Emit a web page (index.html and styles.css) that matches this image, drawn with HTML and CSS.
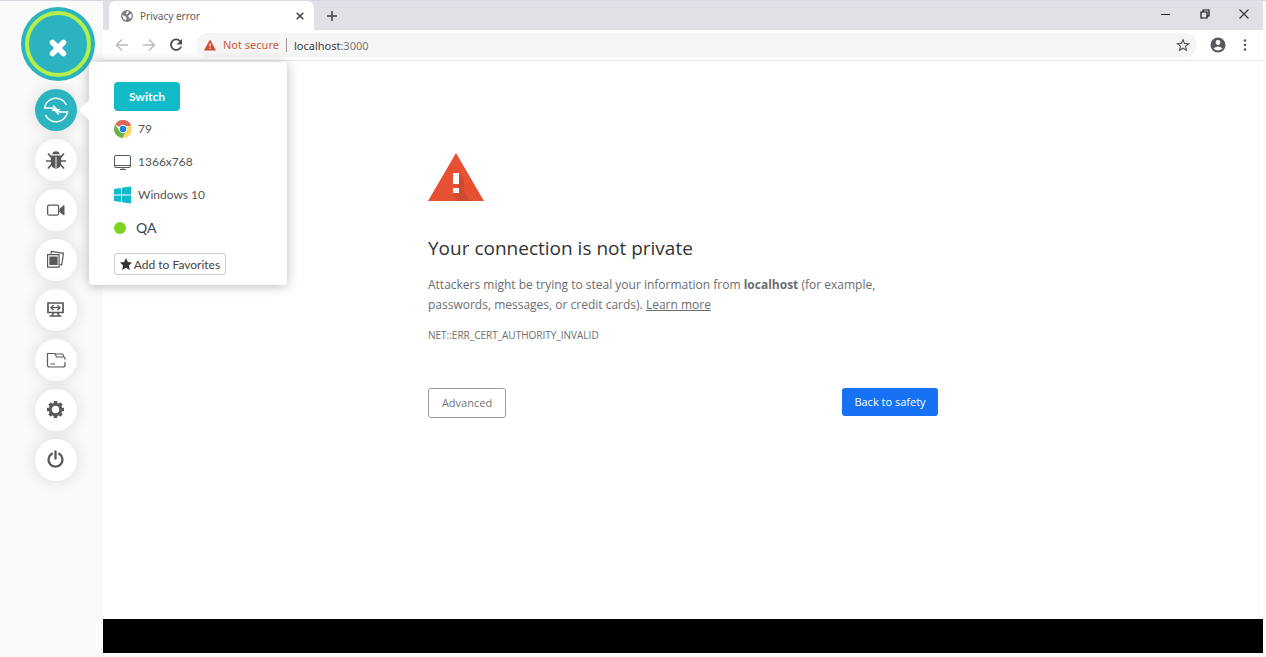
FILE: index.html
```html
<!DOCTYPE html>
<html lang="en">
<head>
<meta charset="utf-8">
<title>Privacy error</title>
<link rel="stylesheet" href="styles.css">
</head>
<body>
<div class="app">
  <aside class="sidebar">
    <button class="toggle" aria-label="Close menu">
      <svg width="74" height="74" viewBox="0 0 74 74"><circle cx="37" cy="37" r="31" fill="none" stroke="#b5ef4a" stroke-width="4"/><path d="M31.500 35.500l11 11M42.500 35.500l-11 11" stroke="#fff" stroke-width="5.600" stroke-linecap="round"/></svg>
    </button>
    <nav class="tools">
      <div class="tool-wrap">
        <button class="tool active" aria-label="Switch">
          <svg width="26" height="26" viewBox="0 0 26 26" fill="none" stroke="#fff" stroke-width="1.500"><path d="M23.500 8A11.600 11.600 0 0 0 1.500 11H9l4 1.500M10 8.500l4 4-5 1M2.500 18A11.600 11.600 0 0 0 24.500 15H17l-4-1.500M16 17.500l-4-4 5-1"/></svg>
        </button>
        <section class="panel">
          <button class="switch">Switch</button>
          <ul class="specs">
            <li><svg width="18" height="18" viewBox="0 0 18 18"><path d="M9 9L1.200 4.500A9 9 0 0 1 16.800 4.500L17 6H9z" fill="#db6757"/><path d="M9 9l8-4a9 9 0 0 1-8.500 13l4-7z" fill="#fdd663"/><path d="M1.200 4.500L5.500 11l6 1L8.500 18A9 9 0 0 1 1.200 4.500z" fill="#6ab344"/><circle cx="9" cy="9" r="4.200" fill="#fff"/><circle cx="9" cy="9" r="3.300" fill="#1d84d8"/></svg>79</li>
            <li><svg width="18" height="18" viewBox="0 0 18 18" fill="none" stroke="#58595b"><rect x=".5" y="2.500" width="16" height="12" rx="1.500"/><path d="M1 12.500h15M6 16.500h6M9 14.500v2"/></svg>1366x768</li>
            <li><svg width="18" height="18" viewBox="0 0 18 18" fill="#10bac7"><path d="M0 3l7-1v6.500H0zM8 1.800L17 .5v8H8zM0 9.500h7V16l-7-1zM8 9.500h9v8l-9-1.300z"/></svg>Windows 10</li>
            <li class="env"><span class="dot"></span>QA</li>
          </ul>
          <button class="favorite"><svg width="12" height="12" viewBox="0 0 24 24" fill="#333"><path d="M12 0l3.700 8 8.300 1-6.200 6 1.700 9-7.500-4.400L4.500 24l1.700-9L0 9l8.300-1z"/></svg>Add to Favorites</button>
        </section>
      </div>
      <button class="tool" aria-label="Report bug">
        <svg width="20" height="20" viewBox="0 0 20 20" fill="#58595b"><path d="M6.200 4.200a3.900 3.900 0 0 1 7.600 0z"/><path d="M4.800 5.500h10.400v7.500a5.200 5.500 0 0 1-10.400 0z"/><path d="M10 7v11" stroke="#ddd" stroke-width="1.200"/><path d="M5.500 7.500L2 3.500M5 11H0M5.500 14.500L2 18.500M14.500 7.500L18 3.500M15 11h5M14.500 14.500l3.500 4" stroke="#58595b" stroke-width="1.700"/></svg>
      </button>
      <button class="tool" aria-label="Record video">
        <svg width="20" height="20" viewBox="0 0 20 20"><rect x="1.600" y="5.100" width="11" height="10" rx="1.500" fill="none" stroke="#58595b" stroke-width="1.300"/><path d="M14 9l4-3.500v9.500L14 12z" fill="#58595b" stroke="#58595b" stroke-linejoin="round"/></svg>
      </button>
      <button class="tool" aria-label="Gallery">
        <svg width="20" height="20" viewBox="0 0 20 20" fill="none" stroke="#58595b" stroke-width="1.200"><path d="M1.600 4.600h11.500v12.500H1.600z"/><path d="M4 7h7v7.500H4z" fill="#58595b"/><path d="M5 4l.3-2.500 12.200 1.800-1.800 11.500-2-.3"/></svg>
      </button>
      <button class="tool" aria-label="Change resolution">
        <svg width="20" height="20" viewBox="0 0 20 20" fill="none" stroke="#58595b"><path d="M2 3h15v9.500H2z" stroke-width="1.700"/><path d="M5 7.700h9M7.500 5.200L5 7.700l2.500 2.500M11.500 5.200L14 7.700l-2.500 2.500" stroke-width="1.300"/><path d="M7.500 13L6 15.500M11.500 13l1.500 2.500M3.500 16h12" stroke-width="1.600"/></svg>
      </button>
      <button class="tool" aria-label="Project">
        <svg width="20" height="20" viewBox="0 0 20 20" fill="none" stroke="#58595b" stroke-width="1.200"><path d="M16.500 17H3.500q-2 0-2-2V3.500h7.500l1.500 3.500h7q1.500 0 1.500 1.500v1M19 12v3q0 2-2.500 2M9.500 4h7l1.500 2.500M4.500 14h4.500"/></svg>
      </button>
      <button class="tool" aria-label="Settings">
        <svg width="20" height="20" viewBox="0 0 20 20" fill="none" stroke="#58595b"><circle cx="9.500" cy="9.500" r="5.300" stroke-width="3"/><path d="M9.500 1v3M9.500 15v3M1 9.500h3M15 9.500h3M3.500 3.500l2 2M13.500 13.500l2 2M15.500 3.500l-2 2M5.500 13.500l-2 2" stroke-width="3.600"/></svg>
      </button>
      <button class="tool" aria-label="End session">
        <svg width="20" height="20" viewBox="0 0 20 20" fill="none" stroke="#58595b" stroke-width="2.300" stroke-linecap="round"><path d="M9.500 1.500v7M5.800 3.700a7 7 0 1 0 7.400 0"/></svg>
      </button>
    </nav>
  </aside>

  <main class="browser">
    <header class="tabbar">
      <div class="tab">
        <svg width="12" height="12" viewBox="0 0 12 12"><circle cx="6" cy="6" r="6" fill="#7b7e82"/><path d="M1 5l3 1 1.500 1.500L5 10.500 2.500 9zM7 6l3-2.500 1 2.500-2 3-1-1.500zM6 1l2 .5-1.500 2.500L5 4.500z" fill="#fff"/></svg>
        <span class="tab-title">Privacy error</span>
        <button class="icon" aria-label="Close tab"><svg width="8" height="8" viewBox="0 0 8 8"><path d="M.7.700l6.600 6.600M7.300.700L.7 7.300" stroke="#3c4043" stroke-width="1.500"/></svg></button>
      </div>
      <button class="icon" aria-label="New tab"><svg width="12" height="12" viewBox="0 0 12 12"><path d="M6 1v10M1 6h10" stroke="#3c4043" stroke-width="1.500"/></svg></button>
      <div class="window-controls">
        <button class="icon" aria-label="Minimize"><svg width="10" height="10" viewBox="0 0 10 10"><path d="M0 5.500h9" stroke="#222"/></svg></button>
        <button class="icon" aria-label="Restore"><svg width="10" height="10" viewBox="0 0 10 10" fill="none" stroke="#111"><path d="M1 3h6v6H1zM3 2.500v-1.500h6v6H7.500" stroke-width="1.200"/></svg></button>
        <button class="icon" aria-label="Close window"><svg width="10" height="10" viewBox="0 0 10 10"><path d="M.5.500l9 9M9.500.500l-9 9" stroke="#333" stroke-width="1.100"/></svg></button>
      </div>
    </header>
    <div class="toolbar">
      <button class="icon" aria-label="Back"><svg width="14" height="14" viewBox="0 0 14 14" fill="none" stroke="#b9bbbe" stroke-width="1.500"><path d="M13 7H2M7 1.500L1.500 7 7 12.500"/></svg></button>
      <button class="icon" aria-label="Forward"><svg width="14" height="14" viewBox="0 0 14 14" fill="none" stroke="#b9bbbe" stroke-width="1.500"><path d="M1 7h11M7 1.500L12.500 7 7 12.500"/></svg></button>
      <button class="icon" aria-label="Reload"><svg width="14" height="14" viewBox="0 0 14 14"><path d="M11.500 3.500A5.300 5.300 0 1 0 12.200 8.500" fill="none" stroke="#494c50" stroke-width="1.800"/><path d="M13 1v5.500H7.500z" fill="#494c50"/></svg></button>
      <div class="address">
        <svg width="12" height="12" viewBox="0 0 12 12"><path d="M6 .5L12 11.500H0z" fill="#d14a2c"/><path d="M6 4.500v3M6 8.700v1.300" stroke="#fff" stroke-width="1.300"/></svg>
        <span class="insecure">Not secure</span>
        <span class="url">localhost<span class="port">:3000</span></span>
        <button class="icon star" aria-label="Bookmark"><svg width="14" height="14" viewBox="0 0 24 24" fill="none" stroke="#55585c" stroke-width="2"><path d="M12 3l2.700 6.300 6.800.6-5.200 4.500 1.600 6.600-5.900-3.500L6.100 21l1.600-6.600L2.500 9.900l6.800-.6z"/></svg></button>
      </div>
      <button class="icon profile" aria-label="Profile"><svg width="16" height="16" viewBox="0 0 16 16"><circle cx="8" cy="8" r="7.500" fill="#55585c"/><circle cx="8" cy="5.500" r="2.400" fill="#fff"/><path d="M3.500 11.500q4.500-4 9 0-4.500 4-9 0z" fill="#fff"/></svg></button>
      <button class="icon" aria-label="Menu"><svg width="4" height="14" viewBox="0 0 4 14" fill="#55585c"><circle cx="2" cy="2.500" r="1.300"/><circle cx="2" cy="7" r="1.300"/><circle cx="2" cy="11.500" r="1.300"/></svg></button>
    </div>
    <div class="page">
      <article class="error">
        <svg class="warning" width="56" height="48" viewBox="0 0 56 48"><path d="M28 0l28 48H0z" fill="#e65134"/><path d="M31 20l5 5v12l6 11H31l-6-7 6-10z" fill="#ce4a30"/><path d="M25 20h6v11h-6zM25 35h6v5h-6z" fill="#fff"/></svg>
        <h1>Your connection is not private</h1>
        <p>Attackers might be trying to steal your information from <strong>localhost</strong> (for example, passwords, messages, or credit cards). <a href="#">Learn more</a></p>
        <p class="code">NET::ERR_CERT_AUTHORITY_INVALID</p>
        <div class="actions">
          <button class="advanced">Advanced</button>
          <button class="safety">Back to safety</button>
        </div>
      </article>
    </div>
    <div class="taskbar"></div>
  </main>
</div>
</body>
</html>
```
FILE: styles.css
```css
* { box-sizing: border-box; }
body { margin: 0; background: #fafafa; font-family: "Open Sans", "Noto Sans", sans-serif; }
button { font: inherit; padding: 0; border: 0; background: none; cursor: pointer; }
svg { display: block; flex: none; }
h1, p, ul { margin: 0; padding: 0; }

.app { display: grid; grid-template-columns: 103px 1fr; min-height: 100vh; padding: 0 3px 4px 0; border-top: 1px solid #d9dae1; }

.sidebar { padding: 6px 0 0 21px; font-family: Lato, sans-serif; position: relative; z-index: 1; }
.toggle { display: block; width: 74px; height: 74px; border-radius: 50%; background: #2bb3c0; }
.tools { display: flex; flex-direction: column; gap: 8px; padding: 8px 0 0 14px; }
.tool-wrap { position: relative; z-index: 1; width: 42px; }
.tool { display: flex; align-items: center; justify-content: center; width: 42px; height: 42px; border-radius: 50%; background: #fff; box-shadow: 0 0 16px rgba(0, 0, 0, .13); }
.tool.active { background: #2bb3c0; }

.panel { position: absolute; top: -27px; left: 54px; width: 198px; padding: 20px 25px 10px; border-radius: 4px; background: #fff; box-shadow: 0 1px 12px rgba(0, 0, 0, .28); }
.panel::before { content: ""; position: absolute; top: 38px; left: -10px; border: 10px solid transparent; border-left: 0; border-right-color: #fff; }
.switch { display: block; width: 66px; height: 29px; border-radius: 4px; background: #10bac7; color: #fff; font-size: 12px; font-weight: 700; }
.specs { list-style: none; color: #555; font-size: 12px; margin-top: 1px; }
.specs li { display: flex; align-items: center; gap: 6px; height: 33px; }
.specs .env { gap: 10px; color: #34435a; font-size: 14px; }
.dot { width: 12px; height: 12px; border-radius: 50%; background: #7ed321; }
.favorite { display: flex; align-items: center; justify-content: center; gap: 2px; width: 112px; height: 22px; margin-top: 9px; border: 1px solid #ccc; border-radius: 3px; color: #444; font-size: 12px; white-space: nowrap; }

.browser { display: flex; flex-direction: column; background: #fff; }
.icon { display: flex; align-items: center; justify-content: center; }
.tabbar { display: flex; align-items: center; gap: 12px; height: 29px; padding: 0 14px 0 6px; background: #dfe1e6; }
.tab { display: flex; align-items: center; gap: 7px; width: 205px; height: 29px; padding: 0 10px 0 12px; border-radius: 7px 7px 0 0; background: #fff; }
.tab-title { flex: 1; color: #5a5d61; font-family: "Noto Sans", sans-serif; font-size: 10px; }
.window-controls { display: flex; gap: 29px; margin-left: auto; padding-bottom: 4px; }
.toolbar { display: flex; align-items: center; gap: 13px; height: 31px; padding: 0 16px 0 12px; border-bottom: 1px solid #e8e8ea; }
.address { display: flex; flex: 1; align-items: center; gap: 7px; height: 24px; padding: 0 7px 0 8px; border-radius: 12px; background: #f5f5f6; font-size: 11px; }
.insecure { padding-right: 7px; border-right: 1px solid #999; color: #cf5a38; line-height: 14px; }
.url { color: #3c4043; }
.port { color: #777; }
.star { margin-left: auto; }
.profile { margin-right: 4px; }

.page { flex: 1; padding: 92px 24px 24px; }
.error { max-width: 510px; margin: 0 auto; color: #6b6d70; font-size: 12px; line-height: 20px; }
.error p { max-width: 470px; }
.error a { color: inherit; }
.error h1 { margin: 32px 0 12px; color: #333; font-size: 19px; font-weight: 400; line-height: 30px; }
.error .code { margin-top: 10px; font-size: 10px; }
.actions { display: flex; align-items: flex-start; justify-content: space-between; margin-top: 43px; font-size: 11px; }
.advanced { width: 78px; height: 30px; border: 1px solid #999; border-radius: 3px; color: #707276; }
.safety { width: 96px; height: 28px; border-radius: 3px; background: #1672f3; color: #fff; }
.insecure, .url { font-family: "Noto Sans", sans-serif; }
.taskbar { height: 34px; background: #000; }
```
